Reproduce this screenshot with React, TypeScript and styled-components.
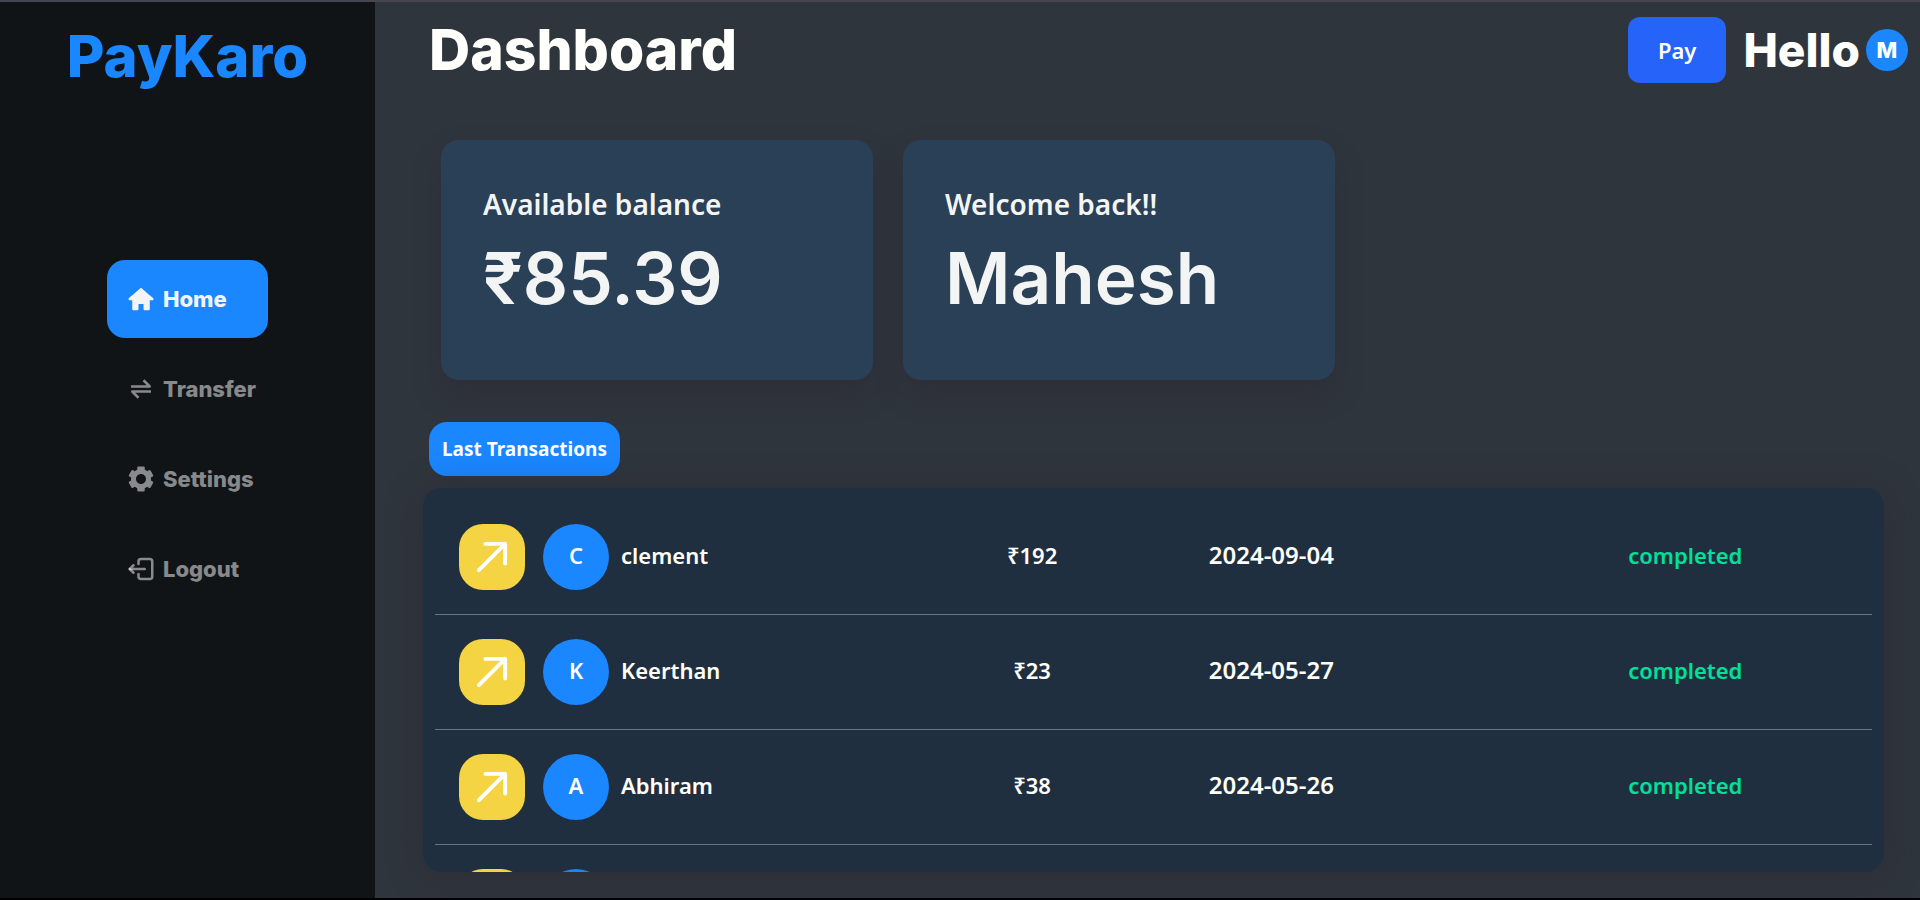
import React from "react";
import styled, { createGlobalStyle } from "styled-components";
import { TiHome } from "react-icons/ti";
import { BiSolidCog, BiTransferAlt } from "react-icons/bi";
import { TbLogout2 } from "react-icons/tb";

const display = `Inter, "Liberation Sans", sans-serif`;
const body = `"Noto Sans", "Open Sans", sans-serif`;

const GlobalStyle = createGlobalStyle`
  *, *::before, *::after { box-sizing: border-box; }
  body { margin: 0; background: #000; font-family: ${body}; color: #fffffb; }
  h1, h2, p { margin: 0; }
`;

const Page = styled.div`
  display: flex;
  height: 100vh;
  min-height: 720px;
  border-top: 2px solid #45464f;
  border-bottom: 2px solid #000;
  background: #2f353d;
`;

const Sidebar = styled.aside`
  flex: 0 0 375px;
  display: flex;
  flex-direction: column;
  align-items: center;
  padding-top: 12px;
  background: #101417;
`;

const Brand = styled.a`
  font: 800 58px/84px ${display};
  color: #1a86ff;
  text-decoration: none;
`;

const Nav = styled.nav`
  display: flex;
  flex-direction: column;
  gap: 12px;
  width: 161px;
  margin-top: 162px;
`;

const NavLink = styled.a<{ $active?: boolean }>`
  display: flex;
  align-items: center;
  gap: 7px;
  height: 78px;
  padding-left: 19px;
  border-radius: 18px;
  font: 800 22px/33px ${display};
  text-decoration: none;
  color: ${(p) => (p.$active ? "#f3f5f5" : "rgba(255, 255, 255, 0.5)")};
  background: ${(p) => (p.$active ? "#1a86ff" : "transparent")};

  svg {
    flex: none;
    width: 30px;
    height: 30px;
  }
`;

const Main = styled.main`
  flex: 1;
  min-width: 0;
  display: flex;
  flex-direction: column;
  padding: 0 36px 26px 48px;
`;

const Header = styled.header`
  display: flex;
  align-items: center;
  height: 96px;
  margin-right: -24px;
  padding-left: 6px;
`;

const Title = styled.h1`
  flex: 1;
  font: 800 57px/84px ${display};
`;

const PayButton = styled.button`
  height: 66px;
  padding: 0 30px;
  border: 0;
  border-radius: 12px;
  background: #2563f9;
  color: #fff;
  font: 600 22px/36px ${body};
`;

const Greeting = styled.p`
  margin: 0 6px 0 17px;
  font: 800 46px/66px ${display};
`;

const ProfileBadge = styled.span`
  display: grid;
  place-items: center;
  width: 42px;
  height: 42px;
  border-radius: 50%;
  background: #1a86ff;
  font: 800 22px/33px ${display};
`;

const Cards = styled.section`
  display: flex;
  gap: 30px;
  margin: 42px 18px;
`;

const Card = styled.article`
  flex: 0 1 432px;
  height: 240px;
  padding: 42px;
  border-radius: 18px;
  background: #2a4057;
  color: #f3f5f5;
  box-shadow: 0 15px 30px -3px rgba(45, 36, 44, 0.4);
`;

const CardLabel = styled.h2`
  font: 600 28px/45px ${body};
`;

const CardValue = styled.p`
  font: 600 71px/102px ${display};
`;

const SectionButton = styled.button`
  align-self: flex-start;
  height: 54px;
  margin: 0 0 12px 6px;
  padding: 0 13px;
  border: 0;
  border-radius: 18px;
  background: #1a86ff;
  color: #fff;
  font: 700 19px/30px ${body};
`;

const Panel = styled.section`
  flex: 1;
  min-height: 0;
  overflow-y: auto;
  scrollbar-width: none;
  padding: 12px;
  border-radius: 18px;
  background: #1f2f3f;
  box-shadow: 0 3px 36px rgba(45, 36, 44, 0.4);
`;

const Table = styled.table`
  width: 100%;
  table-layout: fixed;
  border-spacing: 0;
  font: 600 22px/36px ${body};
`;

const Cell = styled.td<{ $width: string }>`
  width: ${(p) => p.$width};
  padding: 0 0 4px;
  border-bottom: 1px solid #6b7280;
  text-align: center;
`;

const PersonCell = styled(Cell)`
  padding: 24px;
`;

const DateCell = styled(Cell)`
  font-size: 24px;
`;

const StatusCell = styled(Cell)`
  padding-left: 108px;
  color: #00e09b;
`;

const Person = styled.div`
  display: flex;
  align-items: center;
`;

const Direction = styled.span`
  display: grid;
  place-items: center;
  width: 66px;
  height: 66px;
  margin-right: 18px;
  border-radius: 24px;
  background: #f4d443;
`;

const Initial = styled.span`
  display: grid;
  place-items: center;
  width: 66px;
  height: 66px;
  margin-right: 12px;
  padding-bottom: 4px;
  border-radius: 50%;
  background: #1a86ff;
`;

const Name = styled.span`
  padding-bottom: 4px;
`;

const ArrowUpRight = () => (
  <svg width="42" height="42" viewBox="0 0 24 24" fill="none" stroke="#fffffb" strokeWidth="2.25" strokeLinecap="round" strokeLinejoin="round" aria-hidden="true">
    <path d="m4.5 19.5 15-15m0 0H8.25m11.25 0v11.25" />
  </svg>
);

const links = [
  { label: "Home", Icon: TiHome, active: true },
  { label: "Transfer", Icon: BiTransferAlt },
  { label: "Settings", Icon: BiSolidCog },
  { label: "Logout", Icon: TbLogout2 },
];

const transactions = [
  { name: "clement", amount: 192, date: "2024-09-04", status: "completed" },
  { name: "Keerthan", amount: 23, date: "2024-05-27", status: "completed" },
  { name: "Abhiram", amount: 38, date: "2024-05-26", status: "completed" },
  { name: "Keerthan", amount: 23, date: "2024-05-26", status: "completed" },
];

export default function App() {
  return (
    <>
      <GlobalStyle />
      <Page>
        <Sidebar>
          <Brand href="#home">PayKaro</Brand>
          <Nav>
            {links.map(({ label, Icon, active }) => (
              <NavLink key={label} href={`#${label.toLowerCase()}`} $active={active}>
                <Icon aria-hidden="true" />
                {label}
              </NavLink>
            ))}
          </Nav>
        </Sidebar>
        <Main>
          <Header>
            <Title>Dashboard</Title>
            <PayButton type="button">Pay</PayButton>
            <Greeting>Hello</Greeting>
            <ProfileBadge>M</ProfileBadge>
          </Header>
          <Cards>
            <Card>
              <CardLabel>Available balance</CardLabel>
              <CardValue>₹85.39</CardValue>
            </Card>
            <Card>
              <CardLabel>Welcome back!!</CardLabel>
              <CardValue>Mahesh</CardValue>
            </Card>
          </Cards>
          <SectionButton type="button">Last Transactions</SectionButton>
          <Panel>
            <Table>
              <tbody>
                {transactions.map((t, i) => (
                  <tr key={i}>
                    <PersonCell $width="33.2%">
                      <Person>
                        <Direction>
                          <ArrowUpRight />
                        </Direction>
                        <Initial>{t.name[0].toUpperCase()}</Initial>
                        <Name>{t.name}</Name>
                      </Person>
                    </PersonCell>
                    <Cell $width="16.7%">₹{t.amount}</Cell>
                    <DateCell $width="16.6%">{t.date}</DateCell>
                    <StatusCell $width="33.5%">{t.status}</StatusCell>
                  </tr>
                ))}
              </tbody>
            </Table>
          </Panel>
        </Main>
      </Page>
    </>
  );
}
